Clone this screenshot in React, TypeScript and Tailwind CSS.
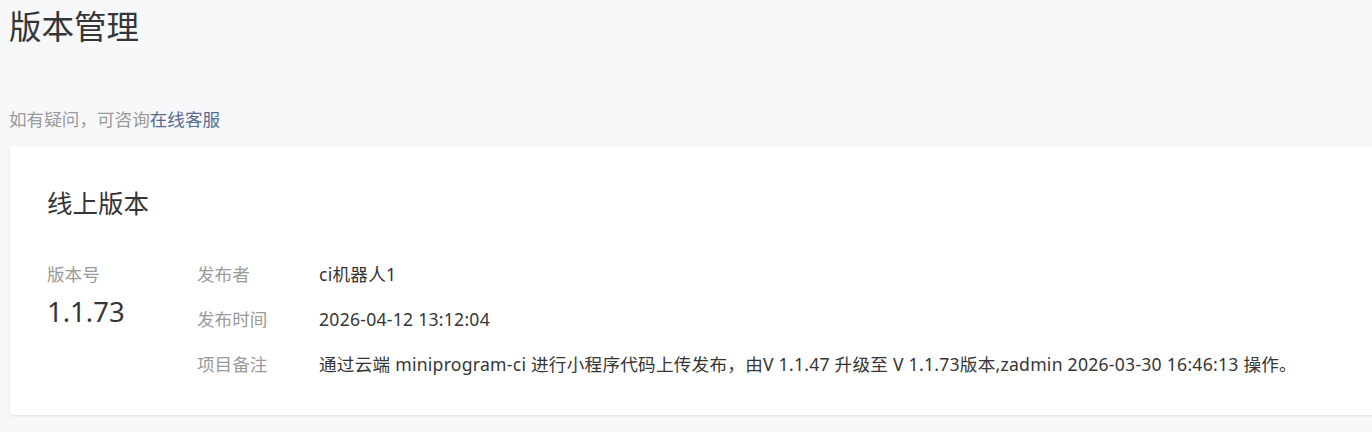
const FONT = "font-['Noto_Sans','Noto_Sans_CJK_SC',sans-serif]";

const rows = [
  { label: "发布者", value: "ci机器人1" },
  { label: "发布时间", value: "2026-04-12 13:12:04" },
  {
    label: "项目备注",
    value:
      "通过云端 miniprogram-ci 进行小程序代码上传发布，由V 1.1.47 升级至 V 1.1.73版本,zadmin 2026-03-30 16:46:13 操作。",
  },
];

export default function App() {
  return (
    <div className={`${FONT} min-h-screen overflow-hidden bg-[#f7f8fa] pl-[9px] pt-[3px] text-[#353535]`}>
      <h1 className="text-[32.5px] leading-[48px] font-normal">版本管理</h1>
      <p className="mt-[55px] text-[17.6px] leading-[26px] text-[#9a9a9a]">
        如有疑问，可咨询<a className="text-[#576b95]">在线客服</a>
      </p>

      <section className="mt-[14px] ml-px -mr-[40px] rounded-[4px] bg-white pt-[39px] pb-[28px] pl-[37px] shadow-[0_1px_3px_rgba(0,0,0,0.1)]">
        <h2 className="text-[25.5px] leading-[36px] font-normal">线上版本</h2>

        <div className="mt-[31px] flex">
          <div className="w-[150px] shrink-0">
            <div className="flex h-[45px] items-center text-[17.6px] text-[#9a9a9a]">版本号</div>
            <div className="text-[27.5px] leading-[30px]">1.1.73</div>
          </div>
          <div className="flex flex-col">
            {rows.map((r) => (
              <div key={r.label} className="flex h-[45px] items-center text-[17.6px]">
                <span className="w-[122px] shrink-0 text-[#9a9a9a]">{r.label}</span>
                <span className="whitespace-nowrap tracking-[0.25px]">{r.value}</span>
              </div>
            ))}
          </div>
        </div>
      </section>
    </div>
  );
}
